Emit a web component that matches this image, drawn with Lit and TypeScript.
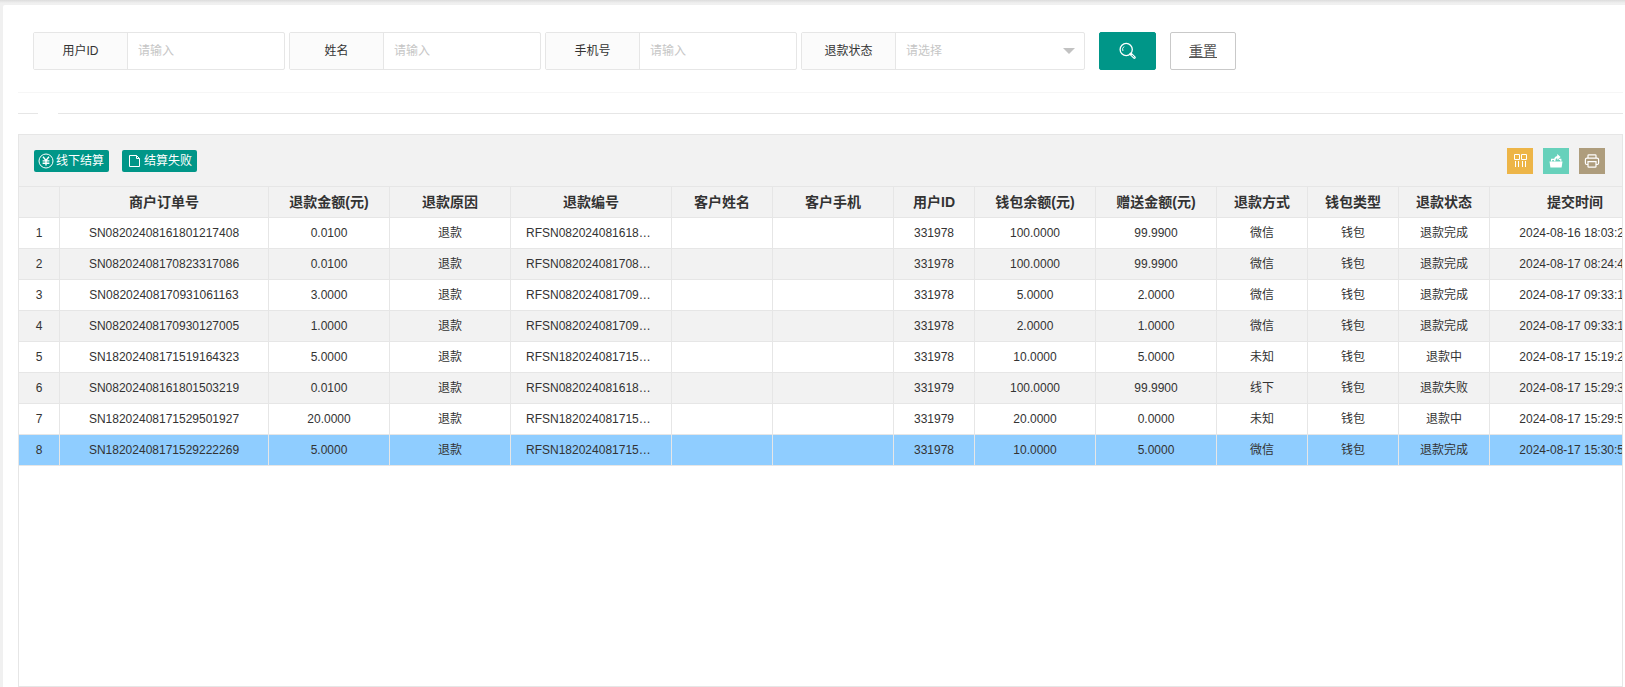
import { LitElement, html, css, svg } from "lit";
import { customElement } from "lit/decorators.js";
import { classMap } from "lit/directives/class-map.js";

interface Column {
  title: string;
  width: number;
}

const columns: Column[] = [
  { title: "", width: 41 },
  { title: "商户订单号", width: 209 },
  { title: "退款金额(元)", width: 121 },
  { title: "退款原因", width: 121 },
  { title: "退款编号", width: 161 },
  { title: "客户姓名", width: 101 },
  { title: "客户手机", width: 121 },
  { title: "用户ID", width: 81 },
  { title: "钱包余额(元)", width: 121 },
  { title: "赠送金额(元)", width: 121 },
  { title: "退款方式", width: 91 },
  { title: "钱包类型", width: 91 },
  { title: "退款状态", width: 91 },
  { title: "提交时间", width: 171 },
];

const rows: string[][] = [
  ["1", "SN08202408161801217408", "0.0100", "退款", "RFSN08202408161801217408", "", "", "331978", "100.0000", "99.9900", "微信", "钱包", "退款完成", "2024-08-16 18:03:20"],
  ["2", "SN08202408170823317086", "0.0100", "退款", "RFSN08202408170823317086", "", "", "331978", "100.0000", "99.9900", "微信", "钱包", "退款完成", "2024-08-17 08:24:40"],
  ["3", "SN08202408170931061163", "3.0000", "退款", "RFSN08202408170931061163", "", "", "331978", "5.0000", "2.0000", "微信", "钱包", "退款完成", "2024-08-17 09:33:10"],
  ["4", "SN08202408170930127005", "1.0000", "退款", "RFSN08202408170930127005", "", "", "331978", "2.0000", "1.0000", "微信", "钱包", "退款完成", "2024-08-17 09:33:10"],
  ["5", "SN18202408171519164323", "5.0000", "退款", "RFSN18202408171519164323", "", "", "331978", "10.0000", "5.0000", "未知", "钱包", "退款中", "2024-08-17 15:19:20"],
  ["6", "SN08202408161801503219", "0.0100", "退款", "RFSN08202408161801503219", "", "", "331979", "100.0000", "99.9900", "线下", "钱包", "退款失败", "2024-08-17 15:29:30"],
  ["7", "SN18202408171529501927", "20.0000", "退款", "RFSN18202408171529501927", "", "", "331979", "20.0000", "0.0000", "未知", "钱包", "退款中", "2024-08-17 15:29:50"],
  ["8", "SN18202408171529222269", "5.0000", "退款", "RFSN18202408171529222269", "", "", "331978", "10.0000", "5.0000", "微信", "钱包", "退款完成", "2024-08-17 15:30:50"],
];

const yenIcon = svg`<svg width="16" height="16" viewBox="0 0 16 16" fill="none" stroke="currentColor" stroke-width="1" aria-hidden="true">
  <circle cx="8" cy="8" r="7"/>
  <path stroke-width="1.4" d="M5 3.8 8 7.4 11 3.8M8 7.4V12.6M4.6 7.9H11.4M4.6 10.2H11.4"/>
</svg>`;

const fileIcon = svg`<svg width="16" height="16" viewBox="0 0 16 16" fill="none" stroke="currentColor" stroke-width="1" aria-hidden="true">
  <path d="M3.5 2.5H10.5L13.5 5.5V13.5H3.5ZM10.5 2.5V5.5H13.5"/>
</svg>`;

const searchIcon = svg`<svg width="19" height="18" viewBox="0 0 19 18" fill="none" stroke="currentColor" aria-hidden="true">
  <circle cx="8.2" cy="7.5" r="6.1" stroke-width="1.3"/>
  <path d="M4.9 9A3.7 3.7 0 0 1 6.1 4.5" stroke-width="0.9"/>
  <path d="M12.8 12 16.4 15.6" stroke-width="2.8" stroke-linecap="round"/>
  <path d="M13.8 13 16.2 15.4" stroke="#009688" stroke-width="0.9"/>
</svg>`;

const columnsIcon = svg`<svg width="16" height="16" viewBox="0 0 16 16" fill="none" stroke="currentColor" stroke-width="1" aria-hidden="true">
  <path d="M2.5 1.5H7.5V6.5H2.5ZM9.5 1.5H14.5V6.5H9.5ZM3.5 8V14M6.5 8V14M10.5 8V14M13.5 8V14"/>
</svg>`;

const exportIcon = svg`<svg width="16" height="16" viewBox="0 0 16 16" fill="currentColor" aria-hidden="true">
  <path d="M1.5 8.6H14.5L13.6 14.4H2.4Z"/>
  <path d="M3.6 8.6V6.4H6M10.8 6.4H12.8V8.6" fill="none" stroke="currentColor" stroke-width="1.2"/>
  <path d="M5.8 8.2C5.8 5 7.2 3.3 9.2 3V1L12.6 4 9.2 7V5.2C7.8 5.4 7.4 6.6 7.4 8.2Z"/>
</svg>`;

const printIcon = svg`<svg width="16" height="16" viewBox="0 0 16 16" fill="none" stroke="currentColor" stroke-width="1.2" aria-hidden="true">
  <path d="M4 5V2.6Q4 1.8 4.8 1.8H11.2Q12 1.8 12 2.6V5"/>
  <path d="M4 11.5H2.8Q1.4 11.5 1.4 10V6.8Q1.4 5.2 3 5.2H13Q14.6 5.2 14.6 6.8V10Q14.6 11.5 13.2 11.5H12"/>
  <path d="M4 8.6H12V13.4Q12 14.2 11.2 14.2H4.8Q4 14.2 4 13.4Z"/>
</svg>`;

@customElement("app-root")
export class AppRoot extends LitElement {
  static styles = css`
    :host {
      display: block;
      box-sizing: border-box;
      min-height: 100vh;
      padding: 5px 0 0 3px;
      background: linear-gradient(#dcdcdc, #f0f0f0 3px);
      color: #333;
      font: 12px/18px "Liberation Sans", "Noto Sans CJK SC", sans-serif;
    }
    *,
    *::before {
      box-sizing: border-box;
    }
    .card {
      display: flex;
      flex-direction: column;
      min-height: calc(100vh - 5px);
      padding: 12px 2px 0 15px;
      background: #fff;
      border-radius: 2px 0 0 0;
    }
    .search {
      display: flex;
      flex-wrap: wrap;
      gap: 14px;
      padding: 15px 15px 22px;
      border-bottom: 1px solid #f6f6f6;
    }
    .fields {
      display: flex;
      flex-wrap: wrap;
      gap: 4px;
    }
    .field {
      display: flex;
      width: 252px;
      height: 38px;
      border: 1px solid #e6e6e6;
      border-radius: 2px;
    }
    .field.wide {
      width: 284px;
    }
    .field label {
      flex: none;
      width: 94px;
      line-height: 36px;
      text-align: center;
      background: #fbfbfb;
      border-right: 1px solid #e6e6e6;
    }
    .field input,
    .field select {
      flex: 1;
      min-width: 0;
      padding: 0 10px;
      border: 0;
      outline: 0;
      background: transparent;
      color: #c6c6c6;
      font: inherit;
      appearance: none;
    }
    .field input::placeholder {
      color: #c6c6c6;
    }
    .pick {
      display: grid;
      flex: 1;
      align-items: center;
    }
    .pick > * {
      grid-area: 1 / 1;
    }
    .pick select {
      height: 36px;
    }
    .pick::after {
      content: "";
      grid-area: 1 / 1;
      justify-self: end;
      margin-right: 9px;
      border: 6px solid transparent;
      border-top-color: #c2c2c2;
      border-bottom-width: 0;
      pointer-events: none;
    }
    .btn {
      display: flex;
      align-items: center;
      justify-content: center;
      height: 38px;
      padding: 0 18px;
      border: 1px solid #009688;
      border-radius: 2px;
      background: #009688;
      color: #fff;
      font: inherit;
      font-size: 14px;
    }
    .btn.plain {
      border-color: #c9c9c9;
      background: #fff;
      color: #555;
      text-decoration: underline;
    }
    .divider {
      display: flex;
      gap: 20px;
      margin: 20px 0;
    }
    .divider::before,
    .divider::after {
      content: "";
      width: 20px;
      height: 1px;
      background: #e6e6e6;
    }
    .divider::after {
      flex: 1;
    }
    .view {
      flex: 1;
      border: 1px solid #e6e6e6;
      overflow: hidden;
    }
    .tools {
      display: flex;
      justify-content: space-between;
      align-items: center;
      height: 52px;
      padding: 0 17px 0 15px;
      background: #f2f2f2;
      border-bottom: 1px solid #e6e6e6;
    }
    .actions {
      display: flex;
      gap: 13px;
    }
    .small {
      display: flex;
      align-items: center;
      gap: 2px;
      height: 22px;
      padding: 0 5px 0 4px;
      border: 0;
      border-radius: 2px;
      background: #009688;
      color: #fff;
      font: inherit;
    }
    .icons {
      display: flex;
      gap: 10px;
    }
    .tool {
      display: grid;
      place-items: center;
      width: 26px;
      height: 26px;
      padding: 0;
      border: 0;
      color: #fff;
    }
    .amber {
      background: #edb548;
    }
    .mint {
      background: #67d1bb;
    }
    .brown {
      background: #ae9d7d;
    }
    table {
      width: 100%;
      min-width: 1642px;
      table-layout: fixed;
      border-collapse: separate;
      border-spacing: 0;
    }
    th,
    td {
      height: 31px;
      padding: 0 15px;
      border: 0 solid #e6e6e6;
      border-width: 0 1px 1px 0;
      text-align: center;
      white-space: nowrap;
      overflow: hidden;
      text-overflow: ellipsis;
    }
    th:first-child,
    td:first-child {
      padding: 0;
    }
    th {
      background: #f2f2f2;
      font-size: 14px;
    }
    .even {
      background: #f2f2f2;
    }
    .chosen {
      background: #8fcdff;
    }
  `;

  render() {
    return html`
      <main class="card">
        <form class="search" @submit=${(e: Event) => e.preventDefault()}>
          <div class="fields">
            <div class="field">
              <label for="uid">用户ID</label>
              <input id="uid" type="text" placeholder="请输入" />
            </div>
            <div class="field">
              <label for="name">姓名</label>
              <input id="name" type="text" placeholder="请输入" />
            </div>
            <div class="field">
              <label for="phone">手机号</label>
              <input id="phone" type="text" placeholder="请输入" />
            </div>
            <div class="field wide">
              <label for="status">退款状态</label>
              <div class="pick">
                <select id="status">
                  <option>请选择</option>
                </select>
              </div>
            </div>
          </div>
          <button class="btn" type="submit" aria-label="搜索">${searchIcon}</button>
          <button class="btn plain" type="reset">重置</button>
        </form>
        <div class="divider"></div>
        <section class="view">
          <div class="tools">
            <div class="actions">
              <button class="small" type="button">${yenIcon}线下结算</button>
              <button class="small" type="button">${fileIcon}结算失败</button>
            </div>
            <div class="icons">
              <button class="tool amber" type="button" aria-label="筛选列">${columnsIcon}</button>
              <button class="tool mint" type="button" aria-label="导出">${exportIcon}</button>
              <button class="tool brown" type="button" aria-label="打印">${printIcon}</button>
            </div>
          </div>
          <table>
            <colgroup>
              ${columns.map((c) => html`<col style="width:${c.width}px" />`)}
            </colgroup>
            <thead>
              <tr>
                ${columns.map((c) => html`<th scope="col">${c.title}</th>`)}
              </tr>
            </thead>
            <tbody>
              ${rows.map(
                (r, i) => html`<tr class=${classMap({ even: i % 2 === 1, chosen: i === 7 })}>
                  ${r.map((v) => html`<td>${v}</td>`)}
                </tr>`
              )}
            </tbody>
          </table>
        </section>
      </main>
    `;
  }
}
